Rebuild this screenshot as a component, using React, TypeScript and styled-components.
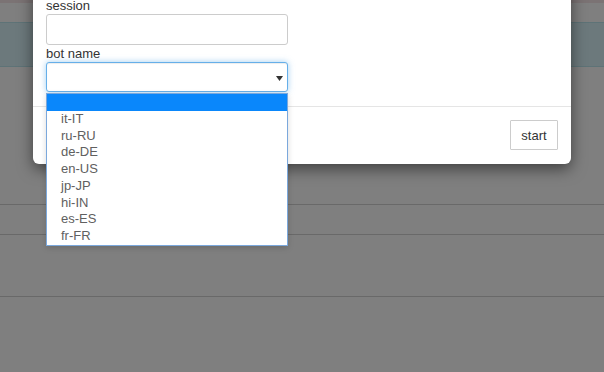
import React from 'react'
import styled, { createGlobalStyle } from 'styled-components'

const GlobalStyle = createGlobalStyle`
  html, body {
    margin: 0;
    padding: 0;
  }
  body {
    font-family: "Liberation Sans", Arial, sans-serif;
    font-size: 13px;
    color: #333;
  }
`

const locales = ['it-IT', 'ru-RU', 'de-DE', 'en-US', 'jp-JP', 'hi-IN', 'es-ES', 'fr-FR']

export default function App() {
  return (
    <Page>
      <GlobalStyle />
      <AlertStrip />
      <InfoBand />
      <TableRule $gap={137} />
      <TableRule $gap={29} />
      <TableRule $gap={61} />

      <Backdrop />

      <Modal>
        <ModalBody>
          <Label>session</Label>
          <TextInput type="text" />
          <Label>bot name</Label>
          <SelectWrap>
            <SelectBox>
              <Caret width="7" height="5" viewBox="0 0 7 5">
                <path d="M0 0 H7 L3.5 5 Z" fill="#333" />
              </Caret>
            </SelectBox>
            <OptionList>
              <OptionItem $active />
              {locales.map((l) => (
                <OptionItem key={l}>{l}</OptionItem>
              ))}
            </OptionList>
          </SelectWrap>
        </ModalBody>
        <ModalFooter>
          <Button>start</Button>
        </ModalFooter>
      </Modal>
    </Page>
  )
}

const Page = styled.div`
  position: relative;
  width: 604px;
  height: 372px;
  overflow: hidden;
  background: #fff;
`

const AlertStrip = styled.div`
  height: 3px;
  background: #f6e6e8;
`

const InfoBand = styled.div`
  margin-top: 19px;
  height: 43px;
  background: #d9f3f8;
  border-top: 1px solid #bde6ee;
  border-bottom: 1px solid #bde6ee;
`

const TableRule = styled.div<{ $gap: number }>`
  margin-top: ${({ $gap }) => $gap}px;
  height: 1px;
  background: #d2d2d2;
`

const Backdrop = styled.div`
  position: absolute;
  inset: 0;
  background: rgba(0, 0, 0, 0.5);
`

const Modal = styled.div`
  position: absolute;
  top: -17px;
  left: 33px;
  width: 538px;
  background: #fff;
  border-radius: 6px;
  box-shadow: 0 5px 15px rgba(0, 0, 0, 0.5);
`

const ModalBody = styled.div`
  padding: 14px 283px 14px 13px;
`

const Label = styled.label`
  display: block;
  line-height: 17px;
  font-size: 13px;
  color: #333;
`

const TextInput = styled.input`
  display: block;
  box-sizing: border-box;
  width: 242px;
  height: 31px;
  margin: 0;
  border: 1px solid #ccc;
  border-radius: 3px;
  background: #fff;
  outline: none;
`

const SelectWrap = styled.div`
  position: relative;
  width: 242px;
`

const SelectBox = styled.div`
  box-sizing: border-box;
  height: 30px;
  border: 1px solid #66afe9;
  border-radius: 3px;
  background: #fff;
  box-shadow: inset 0 1px 1px rgba(0, 0, 0, 0.075), 0 0 6px rgba(102, 175, 233, 0.6);
  display: flex;
  align-items: center;
  justify-content: flex-end;
  padding-right: 4px;
`

const Caret = styled.svg`
  display: block;
  margin-top: 2px;
`

const OptionList = styled.div`
  position: absolute;
  top: 31px;
  left: 0;
  width: 242px;
  box-sizing: border-box;
  border: 1px solid #7ba8dc;
  background: #fff;
  box-shadow: 0 2px 6px rgba(0, 0, 0, 0.15);
  z-index: 2;
`

const OptionItem = styled.div<{ $active?: boolean }>`
  height: 16.75px;
  line-height: 16.75px;
  padding-left: 14px;
  font-size: 13px;
  color: #606060;
  background: ${({ $active }) => ($active ? '#0a87fb' : 'transparent')};
`

const ModalFooter = styled.div`
  border-top: 1px solid #e5e5e5;
  padding: 13px 13px 14px;
  display: flex;
  justify-content: flex-end;
`

const Button = styled.button`
  box-sizing: border-box;
  width: 48px;
  height: 30px;
  padding: 0;
  border: 1px solid #ccc;
  border-radius: 1px;
  background: #fff;
  font-family: "Liberation Sans", Arial, sans-serif;
  font-size: 13px;
  color: #333;
`
